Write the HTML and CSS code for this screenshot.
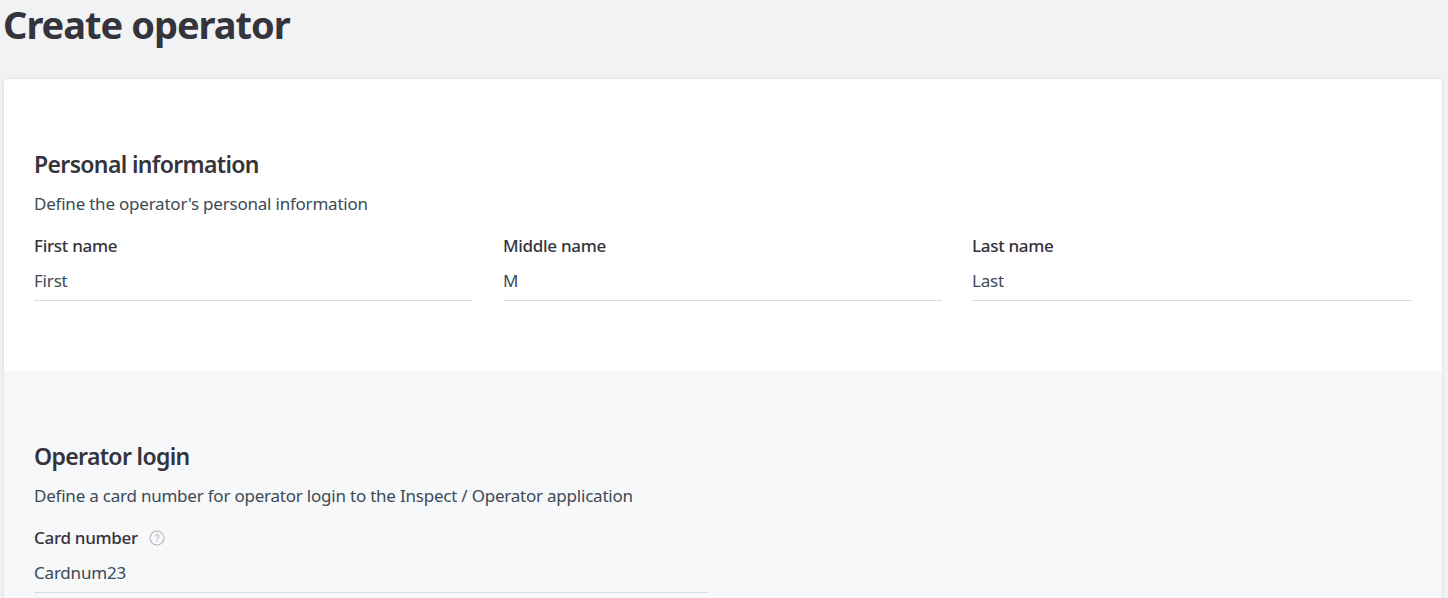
FILE: index.html
```html
<!DOCTYPE html>
<html lang="en">
<head>
<meta charset="utf-8">
<title>Create operator</title>
<link rel="stylesheet" href="styles.css">
</head>
<body>
<header class="page-head"><h1 class="page-title">Create operator</h1></header>
<main class="card">
  <section class="section">
    <h2 class="section-title">Personal information</h2>
    <p class="section-desc">Define the operator's personal information</p>
    <div class="field-row">
      <div class="field"><div class="label-row"><label class="label">First name</label></div><div class="value">First</div></div>
      <div class="field"><div class="label-row"><label class="label">Middle name</label></div><div class="value">M</div></div>
      <div class="field"><div class="label-row"><label class="label">Last name</label></div><div class="value">Last</div></div>
    </div>
  </section>
  <section class="section section-alt">
    <h2 class="section-title">Operator login</h2>
    <p class="section-desc">Define a card number for operator login to the Inspect / Operator application</p>
    <div class="field field-wide">
      <div class="label-row"><label class="label">Card number</label>
        <svg class="help" width="16" height="16" viewBox="0 0 16 16" aria-hidden="true"><circle cx="8" cy="8" r="7" fill="none" stroke="#b4b8bd" stroke-width="1.2"/><path d="M6.2 6.4a1.8 1.8 0 1 1 2.7 1.6c-.6.35-.9.7-.9 1.3" fill="none" stroke="#b4b8bd" stroke-width="1.1"/><circle cx="8" cy="11.2" r=".7" fill="#b4b8bd"/></svg>
      </div>
      <div class="value">Cardnum23</div>
    </div>
  </section>
</main>
</body>
</html>
```
FILE: styles.css
```css
* { box-sizing: border-box; }
html, body { height: 100%; }
body {
  margin: 0;
  background: #f1f2f4;
  color: #35333b;
  font-family: "Noto Sans", "Open Sans", sans-serif;
  overflow: hidden;
}
.page-head { height: 79px; padding: 0 3px; }
.page-title {
  margin: 0;
  font-size: 38px;
  line-height: 48px;
  font-weight: 700;
  letter-spacing: -1px;
  color: #35333b;
}
.card {
  margin: 0 6px 0 4px;
  background: #fff;
  border-radius: 3px;
  box-shadow: 0 0 3px rgba(60, 70, 90, .18);
  overflow: hidden;
}
.section { height: 292px; padding: 70px 31px 0 30px; }
.section-alt { background: #f7f8fa; height: 300px; }
.section-title {
  margin: 0;
  font-size: 23px;
  line-height: 30px;
  font-weight: 600;
  letter-spacing: -0.65px;
}
.section-desc {
  margin: 13px 0 0;
  font-size: 17px;
  line-height: 24px;
  letter-spacing: -0.22px;
  color: #3c4a55;
}
.field-row {
  display: grid;
  grid-template-columns: repeat(3, 1fr);
  gap: 30px;
  margin-top: 18px;
}
.section-alt .field { margin-top: 18px; }
.field-wide { width: 674px; }
.label-row { display: flex; align-items: center; gap: 11px; height: 24px; }
.label { font-size: 17px; line-height: 24px; font-weight: 500; letter-spacing: -0.3px; }
.value {
  height: 43px;
  padding-top: 11px;
  font-size: 17px;
  line-height: 24px;
  letter-spacing: -0.2px;
  color: #3c4a55;
  border-bottom: 1px solid #d9dce0;
}
```
